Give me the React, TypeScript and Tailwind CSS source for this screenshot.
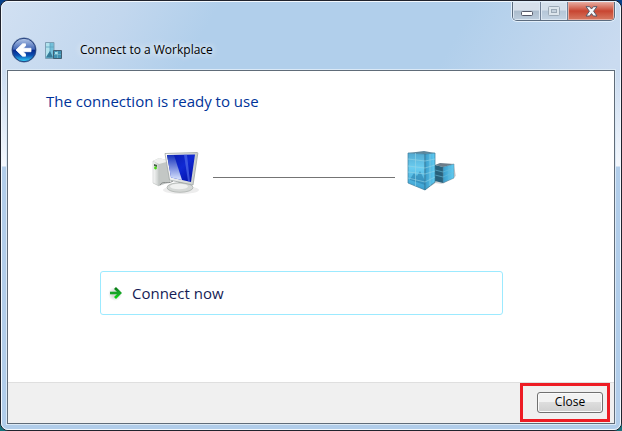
function BackIcon() {
  return (
    <svg width="26" height="26" viewBox="0 0 26 26" aria-hidden="true">
      <defs>
        <linearGradient id="orb" x1="0" y1="0" x2="0" y2="1">
          <stop offset="0" stopColor="#b4c7e6" />
          <stop offset="0.47" stopColor="#4267b7" />
          <stop offset="0.5" stopColor="#06278c" />
          <stop offset="0.72" stopColor="#0b4db0" />
          <stop offset="1" stopColor="#35d8fb" />
        </linearGradient>
      </defs>
      <circle cx="13" cy="13" r="12.5" fill="#7188ae" />
      <circle cx="13" cy="13" r="11.7" fill="url(#orb)" stroke="#24417f" strokeWidth="1" />
      <path d="M5 13L11.5 6.8H14.5V9L12.2 11.3H20V14.7H12.2L14.5 17V19.2H11.5Z" fill="#fff" stroke="#fff" strokeWidth="0.8" strokeLinejoin="round" />
    </svg>
  );
}

function WorkplaceIcon() {
  return (
    <svg width="17" height="17" viewBox="0 0 17 17" aria-hidden="true">
      <path d="M.5 .5H9V16.5H.5Z" fill="#72bfda" stroke="#7f9fb4" />
      <path d="M1 1H5V9L1 15Z" fill="#b1e2ed" />
      <path d="M5 1V16M1 5H9" stroke="#5ba2be" strokeWidth=".8" />
      <path d="M1 15.5L3 12L5 9L8 15.5Z" fill="#367b98" />
      <path d="M8.5 8.5H16.5V16.5H8.5Z" fill="#3f91b2" stroke="#435f73" />
      <path d="M10 10H13V12H10Z" fill="#a4e1ec" />
      <path d="M12.5 9V16M9 12.5H16" stroke="#87bdcc" strokeWidth=".6" />
    </svg>
  );
}

function ComputerIcon() {
  return (
    <svg width="50" height="46" viewBox="0 0 50 46" aria-hidden="true">
      <defs>
        <linearGradient id="screen" x1="0" y1="0" x2="1" y2="1">
          <stop offset="0" stopColor="#0719a6" />
          <stop offset=".5" stopColor="#1029d4" />
          <stop offset="1" stopColor="#000da0" />
        </linearGradient>
        <linearGradient id="shine" x1="0" y1="0" x2="0" y2="1">
          <stop offset="0" stopColor="#1530bb" />
          <stop offset="1" stopColor="#dbe6ff" />
        </linearGradient>
        <linearGradient id="metal">
          <stop stopColor="#fafafa" />
          <stop offset="1" stopColor="#c5cac8" />
        </linearGradient>
      </defs>
      <ellipse cx="30" cy="41" rx="18" ry="4" fill="#ededed" />
      <path d="M2 12L8 9L19 12V33L8 37L2 34Z" fill="#c3c7c5" />
      <path d="M2 12L8 15V37L2 34Z" fill="url(#metal)" stroke="#babebc" strokeWidth=".5" />
      <path d="M2 12L8 9L19 12L8 15Z" fill="#eff0ef" />
      <path d="M3 15L6 16V18L3 17Z" fill="#446044" />
      <circle cx="4.5" cy="19" r="1.4" fill="#48d914" />
      <path d="M9 36C12 31 16 36 22 32" fill="none" stroke="#858988" />
      <path d="M28 30H35L34 39H27Z" fill="#8b918e" />
      <ellipse cx="29" cy="38.5" rx="13" ry="4.8" fill="#d5d8d6" stroke="#a5aaa7" strokeWidth=".7" />
      <ellipse cx="28" cy="37.5" rx="9" ry="2.8" fill="#f0f1f0" />
      <path d="M14 4.5L46 3.5Q47 3.5 46.8 4.5L42 36L18.5 31Z" fill="url(#metal)" stroke="#9fa6a4" strokeWidth=".8" strokeLinejoin="round" />
      <path d="M16 6L44 5.5L40 33L20 28.5Z" fill="url(#screen)" />
      <path d="M16 6H23L31 31L20 28.5Z" fill="url(#shine)" />
      <path d="M33 5.7H36L39 32.7L37 32.3Z" fill="#5874ee" opacity=".6" />
    </svg>
  );
}

function BuildingsIcon() {
  return (
    <svg width="50" height="46" viewBox="0 0 50 46" aria-hidden="true">
      <defs>
        <linearGradient id="glass" x1="0" y1="0" x2="0" y2="1">
          <stop stopColor="#51a9d1" />
          <stop offset=".4" stopColor="#6bcdf0" />
          <stop offset="1" stopColor="#379ed0" />
        </linearGradient>
        <linearGradient id="side">
          <stop stopColor="#3a9cca" />
          <stop offset="1" stopColor="#61cdf4" />
        </linearGradient>
      </defs>
      <path d="M28 34L35 35L49 27L47 17Z" fill="#d5d6d8" />
      <path d="M3 34L18 41L30 33L27 28Z" fill="#bcc3c6" />
      <path d="M28 16L33 14L47 15L36 18Z" fill="#6b7c89" />
      <path d="M28 16L36 18V34L28 32Z" fill="#28617c" />
      <path d="M36 18L47 15V29L36 34Z" fill="url(#side)" stroke="#547a8d" strokeWidth=".5" />
      <path d="M28 21L36 23L47 19M28 26L36 28L47 23M42 17V31" fill="none" stroke="#6cbdda" strokeWidth=".6" />
      <path d="M1 4L17 2L28 4L17 5Z" fill="#5d869b" />
      <path d="M1 4L18 5V41L1 34Z" fill="url(#glass)" stroke="#407f9e" strokeWidth=".7" />
      <path d="M18 5L28 4V33L18 41Z" fill="url(#side)" stroke="#387794" strokeWidth=".7" />
      <path d="M3 30L7 24L10 27L13 22L18 32V36L3 31Z" fill="#267ca9" opacity=".55" />
      <path d="M1 10L18 12L28 10M1 17L18 19L28 16M1 23L18 25L28 22M1 29L18 33L28 28M8.5 4V37M23 5V37" fill="none" stroke="#96d5e8" strokeWidth=".6" />
    </svg>
  );
}

function ArrowIcon() {
  return (
    <svg width="16" height="16" viewBox="0 0 16 16" aria-hidden="true">
      <defs>
        <radialGradient id="halo">
          <stop offset=".4" stopColor="#d5d9d5" />
          <stop offset="1" stopColor="#fff" />
        </radialGradient>
        <linearGradient id="green" x1="0" y1="0" x2="0" y2="1">
          <stop stopColor="#087d14" />
          <stop offset=".5" stopColor="#19a52a" />
          <stop offset="1" stopColor="#07d70d" />
        </linearGradient>
      </defs>
      <circle cx="7" cy="9" r="7" fill="url(#halo)" />
      <path d="M7 3L12 8L7 13" fill="none" stroke="url(#green)" strokeWidth="2.8" />
      <path d="M2 6.7H12V9.3H2Z" fill="#16a426" />
    </svg>
  );
}

function CaptionButtons() {
  return (
    <div className="flex h-[19px] shrink-0 overflow-hidden rounded-b-[5px] border border-t-0 border-[#5b6b7e] shadow-[0_0_0_1px_#e3effa]">
      <button aria-label="Minimize" className="flex w-7 items-center justify-center border-r border-[#718196] bg-linear-to-b from-[#d7e0eb] from-45% via-[#abbccc] via-50% to-[#bdcddd] pt-1 shadow-[inset_0_0_0_1px_#dce7f2]">
        <svg width="12" height="5" viewBox="0 0 12 5" aria-hidden="true">
          <rect x=".5" y=".5" width="11" height="4" rx="1" fill="#fff" stroke="#535768" />
        </svg>
      </button>
      <button aria-label="Maximize" disabled className="flex w-[27px] items-center justify-center border-r border-[#718196] bg-linear-to-b from-[#d4dfea] from-45% via-[#b5c6d8] via-50% to-[#c4d4e3] shadow-[inset_0_0_0_1px_#dce7f2]">
        <svg width="12" height="10" viewBox="0 0 12 10" aria-hidden="true">
          <rect x=".5" y=".5" width="11" height="9" rx="1" fill="#dce5ec" stroke="#9ba9b6" />
          <rect x="3.5" y="3.5" width="5" height="3" fill="#c3d0dc" stroke="#9ba9b6" />
        </svg>
      </button>
      <button aria-label="Close window" className="flex w-[46px] items-center justify-center bg-linear-to-b from-[#e5aba0] via-[#c84531] via-50% to-[#d67962] shadow-[inset_0_0_0_1px_#e7aa9e]">
        <svg width="13" height="11" viewBox="0 0 13 11" aria-hidden="true">
          <path d="M1 .7H4.6L6.5 3L8.4 .7H12L8.6 5.2L12 10H8.4L6.5 7.6L4.6 10H1L4.4 5.2Z" fill="#f7f8fa" stroke="#555969" />
        </svg>
      </button>
    </div>
  );
}

export default function App() {
  return (
    <div className="flex min-h-screen bg-linear-to-b from-[#07418b] to-[#17737c] font-['Open_Sans','Noto_Sans',sans-serif] text-black">
      <div className="flex flex-1 rounded-lg border border-[#20232d] bg-[#b1cdea]">
        <div className="flex flex-1 flex-col rounded-[7px] border border-[#f2f8fe] bg-[linear-gradient(180deg,transparent_70px,#f4f8fd_164px,#b1cdea_165px),linear-gradient(120deg,#d1e0f2_0,#c2d7ee_110px,#b1cfeb_190px,#b1cfeb_410px,#cadbf0_560px,#c5d8ee_100%)] px-[5px] pb-[5px]">
          <header className="flex h-[68px] shrink-0 justify-between">
            <div className="flex items-center pt-7 pl-1">
              <button aria-label="Back" className="rounded-full">
                <BackIcon />
              </button>
              <span className="ml-2"><WorkplaceIcon /></span>
              <h1 className="ml-[18px] text-xs leading-4 text-shadow-[0_0_6px_#fff,0_0_10px_rgb(255_255_255/0.7)]">Connect to a Workplace</h1>
            </div>
            <CaptionButtons />
          </header>
          <main className="flex flex-1 flex-col border border-[#606c79] bg-white shadow-[0_0_0_1px_#dbe9f6]">
            <div className="flex flex-1 flex-col pr-[111px] pl-[38px]">
              <h2 className="mt-[18px] text-[15px] leading-6 text-[#003399]">The connection is ready to use</h2>
              <div className="mt-9 flex items-center pr-[46px] pl-[105px]">
                <ComputerIcon />
                <div className="mx-3 mt-[10px] h-px flex-1 bg-[#747474]" />
                <BuildingsIcon />
              </div>
              <button className="mt-[76px] ml-[54px] flex h-11 items-center gap-2 rounded-[3px] border border-[#9ceaff] pl-[7px] text-left text-[15px] text-[#151c55]">
                <ArrowIcon />
                Connect now
              </button>
            </div>
            <footer className="flex h-[41px] items-center justify-end border-t border-[#dfdfdf] bg-[#f0f0f0] pr-1 pb-[2px]">
              <div className="border-[3px] border-[#ed1c24] py-[6px] pr-1 pl-[14px]">
                <button className="flex h-[21px] w-[66px] items-center justify-center rounded-[3px] border border-[#707070] bg-linear-to-b from-[#f2f2f2] from-45% via-[#dddddd] via-50% to-[#cfcfcf] text-xs shadow-[inset_0_0_0_1px_#fafafa]">
                  Close
                </button>
              </div>
            </footer>
          </main>
        </div>
      </div>
    </div>
  );
}
